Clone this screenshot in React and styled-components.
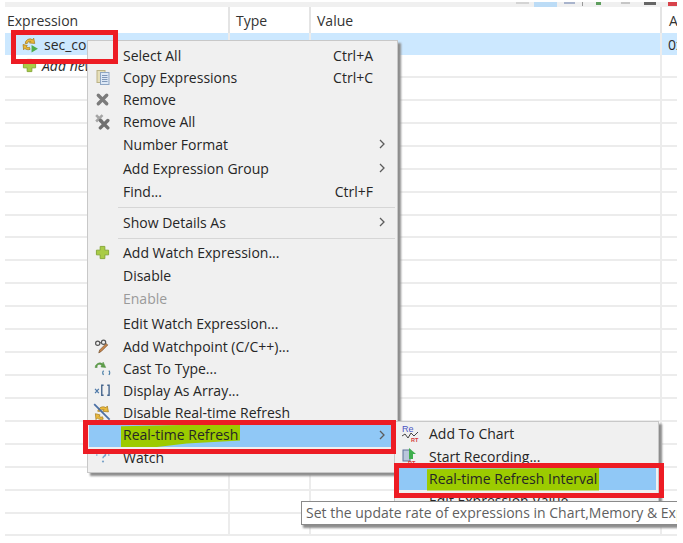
import React from "react";
import styled, { createGlobalStyle } from "styled-components";

const Global = createGlobalStyle`
  html, body { margin: 0; padding: 0; background: #fff; }
  body { font-family: "Open Sans", "Noto Sans", sans-serif; }
`;

const Page = styled.div`
  position: relative;
  width: 677px;
  height: 537px;
  overflow: hidden;
  padding-top: 2px;
  box-sizing: border-box;
  background: #fff;
  color: #262626;
  font-size: 14px;
`;

const ToolStrip = styled.div`
  height: 5px;
  margin-left: 5px;
  background: #f0f0f0;
  display: flex;
  justify-content: flex-end;
  overflow: hidden;
`;

const ToolBit = styled.span`
  width: ${p => p.$w}px;
  height: ${p => p.$h || 3}px;
  margin-left: ${p => p.$gap}px;
  background: ${p => p.$c};
`;

const Columns = "225px 81px 351px 15px";

const Row = styled.div`
  display: grid;
  grid-template-columns: ${Columns};
  margin-left: 5px;
  height: ${p => p.$h}px;
  box-sizing: border-box;
  background: ${p => (p.$selected ? "#cce8ff" : "#fff")};
  border-bottom: ${p => (p.$plain ? "none" : "2px solid #ececec")};
`;

const Cell = styled.div`
  border-right: ${p => (p.$last ? "none" : "2px solid #ececec")};
  display: flex;
  align-items: center;
  padding-left: ${p => p.$pad || 6}px;
  gap: 5px;
  white-space: nowrap;
  overflow: hidden;
  font-style: ${p => (p.$italic ? "italic" : "normal")};
  color: #2b2b2b;
`;

const HeaderCell = styled(Cell)`
  border-right-color: #e4e4e4;
  color: #333;
`;

const Menu = styled.div`
  position: absolute;
  left: 87px;
  top: 40px;
  width: 311px;
  box-sizing: border-box;
  padding: 4px 2px 3px 1px;
  background: #f0f0f0;
  border: 1px solid #c8c8c8;
  box-shadow: 3px 3px 2px #8d8d8d;
  z-index: 2;
`;

const SubMenu = styled(Menu)`
  left: 394px;
  top: 421px;
  width: 265px;
  height: 84px;
  padding: 1px 2px 0 4px;
  z-index: 3;
  overflow: hidden;
`;

const Item = styled.div`
  display: grid;
  grid-template-columns: ${p => p.$col}px 1fr auto;
  align-items: center;
  height: ${p => p.$h || 22}px;
  box-sizing: border-box;
  padding-bottom: 2px;
  background: ${p => (p.$active ? "#90c8f6" : "transparent")};
  color: ${p => (p.$disabled ? "#9a9a9a" : "#262626")};
  white-space: nowrap;
`;

const IconSlot = styled.span`
  display: flex;
  justify-content: center;
  align-items: center;
  padding-right: 7px;
`;

const Shortcut = styled.span`
  padding-right: 22px;
`;

const Chevron = styled.svg`
  width: 6px;
  height: 10px;
  margin-right: 10px;
  fill: none;
  stroke: #5c5c5c;
  stroke-width: 1.3;
`;

const Sep = styled.div`
  height: ${p => p.$h}px;
  display: flex;
  align-items: center;
  margin-left: 29px;
  &::after {
    content: "";
    flex: 1;
    height: 1px;
    background: #d6d6d6;
  }
`;

const Mark = styled.span`
  position: relative;
  z-index: 0;
  &::before {
    content: "";
    position: absolute;
    z-index: -1;
    left: -2px;
    right: -2px;
    top: -1px;
    bottom: -3px;
    background: #9ccb00;
    clip-path: ${p => p.$clip};
  }
`;

const RedBox = styled.div`
  position: absolute;
  left: ${p => p.$x}px;
  top: ${p => p.$y}px;
  width: ${p => p.$w}px;
  height: ${p => p.$h}px;
  box-sizing: border-box;
  border: 5px solid #ed1c24;
  z-index: 5;
`;

const Tip = styled.div`
  position: absolute;
  left: 301px;
  top: 501px;
  width: 400px;
  height: 24px;
  box-sizing: border-box;
  padding: 1px 0 0 4px;
  background: #fff;
  border: 1px solid #8a8a8a;
  box-shadow: 2px 3px 2px #8d8d8d;
  color: #5f5f5f;
  white-space: nowrap;
  z-index: 4;
`;

const Ic = ({ children, s = 16, vb = 16 }) => (
  <svg width={s} height={s} viewBox={`0 0 ${vb} ${vb}`} fill="none">{children}</svg>
);

const PlusIcon = () => (
  <Ic s={15}>
    <path d="M5.500 1.500h5v4h4v5h-4v4h-5v-4h-4v-5h4z" fill="#a9cc46" stroke="#84a636" strokeWidth="1" />
  </Ic>
);
const RefreshIcon = () => (
  <Ic s={17}>
    <path d="M3 7a4.500 4.500 0 0 1 7-3.500l1-1.500 1 5-5-.5 1.300-1.400A2.600 2.600 0 0 0 5 7z" fill="#eab93a" stroke="#a57b1c" strokeWidth=".7" />
    <path d="M1 8l4 1-1 1.200c1 .8 2 .8 3 .4l.6 2c-2 .6-3.600.2-5-.9L1.500 13z" fill="#eab93a" stroke="#a57b1c" strokeWidth=".7" />
    <path d="M9 8.500l6 3.500-6 3.500z" fill="#4fae4a" />
  </Ic>
);
const CopyIcon = () => (
  <Ic>
    <rect x="2" y="1.500" width="8" height="12" fill="#e6dfb8" stroke="#bbb286" />
    <rect x="5.500" y="3.500" width="8.500" height="12" fill="#dde8f5" stroke="#8ea6c4" />
    <path d="M7 6.500h5.500M7 8.500h5.500M7 10.500h5.500M7 12.500h5.500" stroke="#7f97b8" />
  </Ic>
);
const XIcon = () => (
  <Ic s={15}>
    <path d="M3.500 3.500l9 9M12.500 3.500l-9 9" stroke="#7b7b7b" strokeWidth="3.600" strokeLinecap="round" />
  </Ic>
);
const XXIcon = () => (
  <Ic s={17}>
    <path d="M2 2l6 6M8 2l-6 6" stroke="#a5a5a5" strokeWidth="2.400" />
    <path d="M6 7l7 7M13 7l-7 7" stroke="#6f6f6f" strokeWidth="3.200" strokeLinecap="round" />
  </Ic>
);
const WatchpointIcon = () => (
  <Ic s={17}>
    <circle cx="3.500" cy="5" r="2" stroke="#555" strokeWidth="1.100" />
    <circle cx="9" cy="4" r="2" stroke="#555" strokeWidth="1.100" />
    <path d="M5.500 4.500h1.500" stroke="#555" />
    <path d="M13 6.500l-6 6-2.500 1.500.8-2.700 6-6z" fill="#c9854a" stroke="#6b4a2a" strokeWidth=".6" />
  </Ic>
);
const CastIcon = () => (
  <Ic s={17}>
    <path d="M1 7a4.500 4.500 0 0 1 7-3.500l.6-1.500L11 7 6.500 6.500 7.200 5.500A2.200 2.200 0 0 0 3 7z" fill="#5fa04a" stroke="#4d8a3c" strokeWidth=".5" />
    <path d="M9 10c-1 1-1 3 0 4M14 10c1 1 1 3 0 4" stroke="#4a7fa8" strokeWidth="1.200" />
  </Ic>
);
const ArrayIcon = () => (
  <Ic s={17}>
    <path d="M1 6.500l3.500 4M4.500 6.500L1 10.500" stroke="#4d78a8" strokeWidth="1.200" />
    <path d="M9 3H7.300v9.500H9M12.500 3h1.700v9.500h-1.700" stroke="#44648c" strokeWidth="1.300" />
  </Ic>
);
const DisableRefreshIcon = () => (
  <Ic s={19} vb={16}>
    <path d="M4 7a4.500 4.500 0 0 1 7-3l1-1.500 1 5-5-.5 1.300-1.400A2.600 2.600 0 0 0 6 7z" fill="#eab93a" stroke="#a57b1c" strokeWidth=".6" />
    <path d="M2 9l4 1-1 1.200c1 .8 2 .8 3 .4l.6 2c-2 .6-3.600.2-5-.9L2.500 14z" fill="#eab93a" stroke="#a57b1c" strokeWidth=".6" />
    <path d="M1 1l13 13" stroke="#4a6fa5" strokeWidth="1.500" />
  </Ic>
);
const WatchIcon = () => (
  <Ic>
    <path d="M1 3h2.500M1 6h2M12.500 3H15M13 6h2" stroke="#8fb0d0" strokeWidth="1.500" strokeDasharray="1.500 1" />
    <path d="M5.500 5a2.500 2.500 0 1 1 3.500 2.300c-.8.400-1 1-1 2" stroke="#7aa3c8" strokeWidth="1.500" />
    <circle cx="8" cy="12.500" r="1.100" fill="#7aa3c8" />
  </Ic>
);
const ChartIcon = () => (
  <Ic s={19} vb={19}>
    <text x="1" y="8" fontSize="9" fill="#4a55c4" fontFamily="Liberation Sans, sans-serif">Re</text>
    <path d="M1 12l3-2 3 4 3-5 3 3 4-4" stroke="#444" strokeWidth="1" />
    <text x="10" y="18" fontSize="5.500" fontWeight="700" fill="#d43a3a" fontFamily="Liberation Sans, sans-serif">RT</text>
  </Ic>
);
const RecordIcon = () => (
  <Ic s={19} vb={19}>
    <rect x="2" y="3" width="7" height="11" fill="#b9c6dc" stroke="#5d7398" />
    <path d="M8 1l7 6-3 0v5H8z" fill="#3fae4e" />
    <text x="7" y="18" fontSize="5.500" fontWeight="700" fill="#d43a3a" fontFamily="Liberation Sans, sans-serif">RT</text>
  </Ic>
);

const Arrow = () => (
  <Chevron viewBox="0 0 6 10"><path d="M1 1l4 4-4 4" /></Chevron>
);

const menu = [
  { t: "Select All", k: "Ctrl+A", h: 22 },
  { t: "Copy Expressions", k: "Ctrl+C", i: <CopyIcon />, h: 22 },
  { t: "Remove", i: <XIcon />, h: 22 },
  { t: "Remove All", i: <XXIcon />, h: 22 },
  { t: "Number Format", sub: 1, h: 24 },
  { t: "Add Expression Group", sub: 1, h: 24 },
  { t: "Find...", k: "Ctrl+F", h: 22 },
  { sep: 8 },
  { t: "Show Details As", sub: 1, h: 24 },
  { sep: 6 },
  { t: "Add Watch Expression...", i: <PlusIcon />, h: 24 },
  { t: "Disable", h: 22 },
  { t: "Enable", disabled: 1, h: 25 },
  { t: "Edit Watch Expression...", h: 24 },
  { t: "Add Watchpoint (C/C++)...", i: <WatchpointIcon />, h: 22 },
  { t: "Cast To Type...", i: <CastIcon />, h: 22 },
  { t: "Display As Array...", i: <ArrayIcon />, h: 22 },
  { t: "Disable Real-time Refresh", i: <DisableRefreshIcon />, h: 22 },
  { t: "Real-time Refresh", sub: 1, active: 1, mark: "polygon(0 10%, 40% 5%, 100% 0, 100% 72%, 55% 85%, 30% 100%, 0 100%)", h: 23 },
  { t: "Watch", i: <WatchIcon />, h: 22 },
];

const subMenu = [
  { t: "Add To Chart", i: <ChartIcon />, h: 23 },
  { t: "Start Recording...", i: <RecordIcon />, h: 22 },
  { t: "Real-time Refresh Interval", active: 1, mark: "polygon(0 8%, 100% 0, 100% 100%, 0 100%)", h: 22 },
  { t: "Edit Expression Value...", h: 22 },
];

const MenuRows = ({ rows, col }) =>
  rows.map((r, n) =>
    r.sep ? (
      <Sep key={n} $h={r.sep} />
    ) : (
      <Item key={n} $col={col} $h={r.h} $active={r.active} $disabled={r.disabled}>
        <IconSlot>{r.i}</IconSlot>
        <span>{r.mark ? <Mark $clip={r.mark}>{r.t}</Mark> : r.t}</span>
        {r.k ? <Shortcut>{r.k}</Shortcut> : r.sub ? <Arrow /> : <span />}
      </Item>
    )
  );

const emptyRows = Array.from({ length: 20 });

export default function App() {
  return (
    <Page>
      <Global />
      <ToolStrip>
        <ToolBit $w={13} $h={2} $gap={0} $c="#d4d4d4" />
        <ToolBit $w={23} $h={5} $gap={5} $c="#bcdcf6" />
        <ToolBit $w={11} $h={2} $gap={7} $c="#a9b4cc" />
        <ToolBit $w={1} $h={4} $gap={7} $c="#999" />
        <ToolBit $w={5} $h={3} $gap={13} $c="#5e9e5e" />
        <ToolBit $w={9} $h={2} $gap={20} $c="#c6c6c6" />
        <ToolBit $w={12} $h={3} $gap={14} $c="#666" />
        <ToolBit $w={9} $h={4} $gap={12} $c="#d8434b" />
      </ToolStrip>
      <Row $h={26} $plain>
        <HeaderCell $pad={2}>Expression</HeaderCell>
        <HeaderCell>Type</HeaderCell>
        <HeaderCell>Value</HeaderCell>
        <HeaderCell $last $pad={7}>A</HeaderCell>
      </Row>
      <Row $h={22} $selected $plain>
        <Cell $pad={17}><RefreshIcon />sec_co</Cell>
        <Cell>int32</Cell>
        <Cell>273</Cell>
        <Cell $last>0x</Cell>
      </Row>
      <Row $h={23}>
        <Cell $pad={17} $italic><PlusIcon />Add new expression</Cell>
        <Cell /><Cell /><Cell $last />
      </Row>
      {emptyRows.map((_, i) => (
        <Row key={i} $h={22.93}>
          <Cell /><Cell /><Cell /><Cell $last />
        </Row>
      ))}
      <Menu><MenuRows rows={menu} col={34} /></Menu>
      <SubMenu><MenuRows rows={subMenu} col={30} /></SubMenu>
      <Tip>Set the update rate of expressions in Chart,Memory &amp; Expressions</Tip>
      <RedBox $x={11} $y={30} $w={107} $h={34} />
      <RedBox $x={83} $y={420} $w={313} $h={34} />
      <RedBox $x={394} $y={463} $w={270} $h={35} />
    </Page>
  );
}
